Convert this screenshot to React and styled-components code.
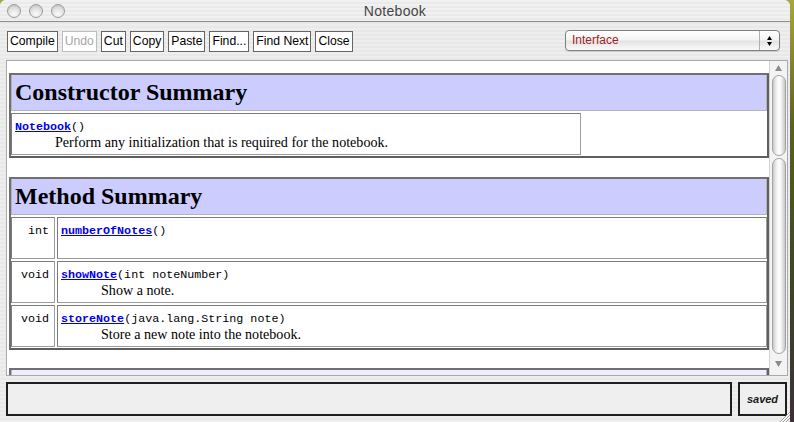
import React from 'react';
import styled, { createGlobalStyle } from 'styled-components';

const GlobalStyle = createGlobalStyle`
  html, body {
    margin: 0;
    padding: 0;
  }
  body {
    width: 794px;
    height: 422px;
    overflow: hidden;
    background: linear-gradient(180deg, #a9a63c 0%, #5b5f24 30%, #3f4a22 60%, #3b2f38 100%);
    font-family: "Liberation Sans", Arial, sans-serif;
  }
`;

const Window = styled.div`
  position: relative;
  width: 790px;
  height: 422px;
  border-radius: 6px 6px 0 0;
  overflow: hidden;
  display: flex;
  flex-direction: column;
  background: repeating-linear-gradient(
    180deg,
    #eeeeee 0px,
    #eeeeee 2px,
    #e8e8e8 2px,
    #e8e8e8 4px
  );
`;

const TitleBar = styled.div`
  box-sizing: border-box;
  height: 22px;
  border-bottom: 1px solid #8c8c8c;
  display: grid;
  grid-template-columns: 1fr auto 1fr;
  align-items: center;
  background: repeating-linear-gradient(
    180deg,
    #f1f1f1 0px,
    #f1f1f1 2px,
    #eaeaea 2px,
    #eaeaea 4px
  );
`;

const Lights = styled.div`
  display: flex;
  gap: 8px;
  padding-left: 7px;
  align-items: center;
`;

const Light = styled.span`
  box-sizing: border-box;
  width: 14px;
  height: 14px;
  border-radius: 50%;
  border: 1px solid #9a9a9a;
  background: radial-gradient(circle at 50% 75%, #fbfbfb 0%, #e2e2e2 50%, #b9b9b9 100%);
`;

const Title = styled.div`
  font-size: 14px;
  color: #454545;
  letter-spacing: 0.3px;
`;

const Toolbar = styled.div`
  box-sizing: border-box;
  height: 38px;
  padding: 9px 10px 0 7px;
  display: flex;
  align-items: flex-start;
`;

const ButtonGroup = styled.div`
  display: flex;
  gap: 4px;
`;

const ToolButton = styled.button`
  box-sizing: border-box;
  height: 21px;
  padding: 0 2px;
  margin: 0;
  border: 1px solid ${(p) => (p.disabled ? '#bdbdbd' : '#646464')};
  background: #ffffff;
  color: ${(p) => (p.disabled ? '#a6a6a6' : '#000000')};
  font-family: "Liberation Sans", Arial, sans-serif;
  font-size: 12.2px;
  line-height: 19px;
  border-radius: 0;
`;

const Select = styled.div`
  box-sizing: border-box;
  margin-left: auto;
  margin-top: -1px;
  width: 215px;
  height: 21px;
  border: 1px solid #7f7f7f;
  border-radius: 4px;
  display: flex;
  align-items: stretch;
  background: linear-gradient(180deg, #ffffff 0%, #f4f4f4 45%, #e4e4e4 55%, #fafafa 100%);
  box-shadow: 0 1px 1px rgba(0, 0, 0, 0.12);
`;

const SelectText = styled.div`
  flex: 1;
  padding-left: 6px;
  font-size: 12px;
  line-height: 19px;
  color: #a2221d;
`;

const SelectArrows = styled.div`
  width: 19px;
  border-left: 1px solid #b0b0b0;
  display: flex;
  flex-direction: column;
  gap: 2px;
  align-items: center;
  justify-content: center;
`;

const Frame = styled.div`
  box-sizing: border-box;
  height: 316px;
  margin: 0 2px 0 6px;
  border: 1px solid #a9a9a9;
  display: flex;
  background: #ffffff;
`;

const Viewport = styled.div`
  flex: 1;
  overflow: hidden;
  padding: 12px 0 0 2px;
`;

const Summary = styled.div`
  box-sizing: border-box;
  width: 760px;
  margin-bottom: ${(p) => p.$after || 0}px;
  border: 2px solid #6f6f6f;
  border-right-color: #5f5f5f;
  border-bottom-color: #5f5f5f;
  padding-bottom: 1px;
  display: flex;
  flex-direction: column;
  gap: 2px;
`;

const HeaderCell = styled.div`
  box-sizing: border-box;
  height: 36px;
  border: 1px solid #b4b4b4;
  border-top: 0;
  background: ${(p) => p.$bg || '#ccccff'};
  padding-left: 3px;
  font-family: "Liberation Serif", "Times New Roman", serif;
  font-weight: bold;
  font-size: 24px;
  line-height: 35px;
  color: #000000;
  white-space: nowrap;
`;

const Row = styled.div`
  display: flex;
  gap: 2px;
`;

const Cell = styled.div`
  box-sizing: border-box;
  height: 42px;
  border: 1px solid #9c9c9c;
  border-top-color: #7c7c7c;
  border-left-color: #7c7c7c;
  padding: 6px 3px 4px;
  width: ${(p) => (p.$width ? `${p.$width}px` : 'auto')};
  flex: ${(p) => (p.$width ? 'none' : '1')};
`;

const TypeCell = styled(Cell)`
  padding-right: 5px;
  text-align: right;
`;

const CodeLine = styled.div`
  font-family: "Liberation Mono", "Courier New", monospace;
  font-size: 11.7px;
  line-height: 15px;
  height: 15px;
  color: #000000;
  white-space: nowrap;
`;

const Link = styled.a`
  color: #0000ee;
  font-weight: bold;
  text-decoration: underline;
`;

const Comment = styled.div`
  font-family: "Liberation Serif", "Times New Roman", serif;
  font-size: 14.1px;
  line-height: 15px;
  height: 15px;
  padding-left: 40px;
  color: #000000;
  white-space: nowrap;
`;

const ScrollBar = styled.div`
  box-sizing: border-box;
  width: 18px;
  border-left: 1px solid #d2d2d2;
  background: #f3f3f3;
  display: flex;
  flex-direction: column;
  align-items: center;
`;

const ArrowBox = styled.div`
  height: ${(p) => p.$h}px;
  width: 100%;
  display: flex;
  align-items: ${(p) => (p.$down ? 'flex-start' : 'center')};
  justify-content: center;
  padding-top: ${(p) => (p.$down ? 7 : 0)}px;
  box-sizing: border-box;
`;

const Pill = styled.div`
  box-sizing: border-box;
  width: 14px;
  height: ${(p) => p.$h}px;
  margin-bottom: ${(p) => p.$gap || 0}px;
  border: 1px solid #a3a3a3;
  border-radius: 7px;
  background: linear-gradient(90deg, #c9c9c9 0%, #ececec 25%, #ffffff 50%, #f1f1f1 70%, #c6c6c6 100%);
`;

const BottomBar = styled.div`
  box-sizing: border-box;
  height: 34px;
  margin-top: 6px;
  padding: 0 3px 0 6px;
  display: flex;
  gap: 6px;
`;

const StatusBox = styled.div`
  box-sizing: border-box;
  flex: 1;
  border: 2px solid #1e1e1e;
  background: #efefef;
`;

const SavedBox = styled.div`
  box-sizing: border-box;
  width: 49px;
  border: 2px solid #1e1e1e;
  background: #efefef;
  display: flex;
  align-items: center;
  justify-content: center;
  font-size: 11px;
  font-weight: bold;
  font-style: italic;
  color: #1a1a1a;
`;

const Grip = styled.svg`
  position: absolute;
  right: 0;
  bottom: 0;
`;

const UpTri = ({ color = '#000', w = 5, h = 4 }) => (
  <svg width={w} height={h} viewBox={`0 0 ${w} ${h}`}>
    <polygon points={`0,${h} ${w / 2},0 ${w},${h}`} fill={color} />
  </svg>
);

const DownTri = ({ color = '#000', w = 5, h = 4 }) => (
  <svg width={w} height={h} viewBox={`0 0 ${w} ${h}`}>
    <polygon points={`0,0 ${w / 2},${h} ${w},0`} fill={color} />
  </svg>
);

const methods = [
  { type: 'int', name: 'numberOfNotes', args: '()', comment: '' },
  { type: 'void', name: 'showNote', args: '(int noteNumber)', comment: 'Show a note.' },
  {
    type: 'void',
    name: 'storeNote',
    args: '(java.lang.String note)',
    comment: 'Store a new note into the notebook.',
  },
];

const buttons = ['Compile', 'Undo', 'Cut', 'Copy', 'Paste', 'Find...', 'Find Next', 'Close'];

export default function App() {
  return (
    <>
      <GlobalStyle />
      <Window>
        <TitleBar>
          <Lights>
            <Light />
            <Light />
            <Light />
          </Lights>
          <Title>Notebook</Title>
          <div />
        </TitleBar>

        <Toolbar>
          <ButtonGroup>
            {buttons.map((b) => (
              <ToolButton key={b} disabled={b === 'Undo'}>
                {b}
              </ToolButton>
            ))}
          </ButtonGroup>
          <Select>
            <SelectText>Interface</SelectText>
            <SelectArrows>
              <UpTri />
              <DownTri />
            </SelectArrows>
          </Select>
        </Toolbar>

        <Frame>
          <Viewport>
            <Summary $after={19}>
              <HeaderCell>Constructor Summary</HeaderCell>
              <Row>
                <Cell $width={570}>
                  <CodeLine>
                    <Link>Notebook</Link>()
                  </CodeLine>
                  <Comment>Perform any initialization that is required for the notebook.</Comment>
                </Cell>
              </Row>
            </Summary>

            <Summary $after={18}>
              <HeaderCell>Method Summary</HeaderCell>
              {methods.map((m) => (
                <Row key={m.name}>
                  <TypeCell $width={44}>
                    <CodeLine>{m.type}</CodeLine>
                  </TypeCell>
                  <Cell>
                    <CodeLine>
                      <Link>{m.name}</Link>
                      {m.args}
                    </CodeLine>
                    <Comment>{m.comment}</Comment>
                  </Cell>
                </Row>
              ))}
            </Summary>

            <Summary>
              <HeaderCell $bg="#eeeeff" />
            </Summary>
          </Viewport>

          <ScrollBar>
            <ArrowBox $h={14}>
              <UpTri color="#8c8c8c" w={7} h={6} />
            </ArrowBox>
            <Pill $h={81} $gap={2} />
            <Pill $h={196} />
            <ArrowBox $h={19} $down>
              <DownTri color="#8c8c8c" w={7} h={6} />
            </ArrowBox>
          </ScrollBar>
        </Frame>

        <BottomBar>
          <StatusBox />
          <SavedBox>saved</SavedBox>
        </BottomBar>

        <Grip width="13" height="13" viewBox="0 0 13 13">
          <line x1="3" y1="13" x2="13" y2="3" stroke="#a0a0a0" strokeWidth="1" />
          <line x1="6" y1="13" x2="13" y2="6" stroke="#a0a0a0" strokeWidth="1" />
          <line x1="9" y1="13" x2="13" y2="9" stroke="#a0a0a0" strokeWidth="1" />
          <line x1="4" y1="13" x2="13" y2="4" stroke="#ffffff" strokeWidth="1" />
          <line x1="7" y1="13" x2="13" y2="7" stroke="#ffffff" strokeWidth="1" />
        </Grip>
      </Window>
    </>
  );
}
